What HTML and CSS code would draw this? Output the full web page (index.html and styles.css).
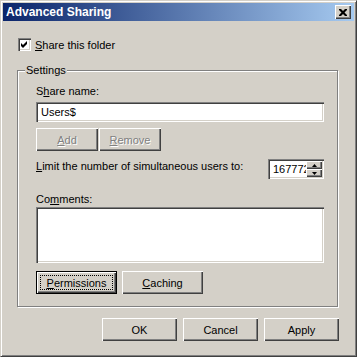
FILE: index.html
```html
<!DOCTYPE html>
<html lang="en">
<head>
  <meta charset="UTF-8" />
  <title>Advanced Sharing</title>
  <link rel="stylesheet" href="styles.css">
</head>
<body>
  <div class="window">
    <div class="titlebar">
      <span class="title">Advanced Sharing</span>
      <button class="close-btn" aria-label="Close">
        <svg width="8" height="7" viewBox="0 0 8 7">
          <path d="M0 0h2l2 2 2-2h2v1l-2.5 2.5 2.5 2.5v1h-2l-2-2-2 2h-2v-1l2.5-2.5-2.5-2.5z" fill="#000"/>
        </svg>
      </button>
    </div>

    <div class="content">
      <label class="check-row">
        <span class="checkbox">
          <svg width="9" height="9" viewBox="0 0 9 9">
            <polygon points="1,3 3,5 7,1 7,4 3,8 1,6" fill="#000"/>
          </svg>
        </span>
        <span><u>S</u>hare this folder</span>
      </label>

      <fieldset class="group">
        <legend>Settings</legend>
        <div class="group-body">
          <div class="label">S<u>h</u>are name:</div>
          <div class="field">Users$</div>

          <div class="btn-pair">
            <button class="btn small" disabled><u>A</u>dd</button>
            <button class="btn small" disabled><u>R</u>emove</button>
          </div>

          <div class="limit-row">
            <span class="limit-text"><u>L</u>imit the number of simultaneous users to:</span>
            <div class="spinner">
              <span class="spin-value">16777216</span>
              <div class="spin-btns">
                <span class="spin-btn">
                  <svg width="5" height="3" viewBox="0 0 5 3"><polygon points="2.5,0 5,3 0,3" fill="#000"/></svg>
                </span>
                <span class="spin-btn">
                  <svg width="5" height="3" viewBox="0 0 5 3"><polygon points="0,0 5,0 2.5,3" fill="#000"/></svg>
                </span>
              </div>
            </div>
          </div>

          <div class="label comments-label">Co<u>m</u>ments:</div>
          <div class="field textarea"></div>

          <div class="btn-row">
            <button class="btn wide default"><span class="focus"><u>P</u>ermissions</span></button>
            <button class="btn wide"><u>C</u>aching</button>
          </div>
        </div>
      </fieldset>

      <div class="dialog-buttons">
        <button class="btn">OK</button>
        <button class="btn">Cancel</button>
        <button class="btn">Apply</button>
      </div>
    </div>
  </div>
</body>
</html>
```

FILE: styles.css
```css
body {
  margin: 0;
  font-family: 'Liberation Sans', Arial, sans-serif;
  font-size: 11px;
  color: #000;
  background: #d4d0c8;
}

u {
  text-decoration: underline;
  text-underline-offset: 1px;
}

.window {
  width: 357px;
  height: 357px;
  box-sizing: border-box;
  border: 1px solid;
  border-color: #d4d0c8 #404040 #404040 #d4d0c8;
  box-shadow: inset 1px 1px #fff, inset -1px -1px #808080;
  padding: 2px;
  background: #d4d0c8;
}

.titlebar {
  height: 18px;
  display: flex;
  align-items: center;
  justify-content: space-between;
  padding: 0 3px 0 3px;
  background: linear-gradient(to right, #0a246a, #a6caf0);
}

.title {
  color: #fff;
  font-weight: bold;
  font-size: 12px;
}

.close-btn {
  width: 16px;
  height: 14px;
  padding: 0;
  border: none;
  background: #d4d0c8;
  box-shadow: inset 1px 1px #fff, inset -1px -1px #404040, inset -2px -2px #808080;
  display: flex;
  align-items: center;
  justify-content: center;
}

.content {
  padding: 17px 16px 0 14px;
}

.check-row {
  display: flex;
  align-items: center;
  gap: 4px;
  height: 13px;
  margin-left: 1px;
}

.checkbox {
  width: 13px;
  height: 13px;
  box-sizing: border-box;
  background: #fff;
  box-shadow: inset 1px 1px #808080, inset 2px 2px #404040, inset -1px -1px #fff, inset -2px -2px #d4d0c8;
  display: flex;
  align-items: center;
  justify-content: center;
}

.group {
  margin: 13px 0 0 0;
  padding: 0;
  border: 1px solid #808080;
  box-shadow: inset 1px 1px #fff, 1px 1px #fff;
  min-width: 0;
}

.group legend {
  margin-left: 7px;
  padding: 0 1px;
  line-height: 13px;
  background: #d4d0c8;
}

.group-body {
  padding: 8px 13px 12px 18px;
}

.label {
  line-height: 13px;
  margin-bottom: 4px;
}

.field {
  height: 20px;
  box-sizing: border-box;
  background: #fff;
  box-shadow: inset 1px 1px #808080, inset 2px 2px #404040, inset -1px -1px #fff, inset -2px -2px #d4d0c8;
  padding: 3px 5px;
  line-height: 14px;
}

.btn {
  width: 75px;
  height: 23px;
  padding: 0;
  border: none;
  background: #d4d0c8;
  box-shadow: inset 1px 1px #fff, inset -1px -1px #404040, inset -2px -2px #808080;
  font-family: inherit;
  font-size: 11px;
  color: #000;
}

.btn:disabled {
  color: #808080;
  text-shadow: 1px 1px #fff;
}

.btn-pair {
  display: flex;
  gap: 1px;
  margin-top: 6px;
}

.btn.small {
  width: 62px;
}

.limit-row {
  display: flex;
  justify-content: space-between;
  align-items: flex-start;
  margin-top: 8px;
}

.limit-text {
  padding-top: 1px;
  line-height: 13px;
}

.spinner {
  width: 56px;
  height: 20px;
  box-sizing: border-box;
  background: #fff;
  box-shadow: inset 1px 1px #808080, inset 2px 2px #404040, inset -1px -1px #fff, inset -2px -2px #d4d0c8;
  padding: 2px 2px 2px 5px;
  display: flex;
  align-items: stretch;
}

.spin-value {
  flex: 1;
  overflow: hidden;
  white-space: nowrap;
  line-height: 16px;
}

.spin-btns {
  width: 16px;
  display: flex;
  flex-direction: column;
}

.spin-btn {
  flex: 1;
  background: #d4d0c8;
  box-shadow: inset 1px 1px #fff, inset -1px -1px #404040, inset -2px -2px #808080;
  display: flex;
  align-items: center;
  justify-content: center;
}

.comments-label {
  margin-top: 14px;
  margin-bottom: 1px;
}

.textarea {
  height: 56px;
}

.btn-row {
  display: flex;
  gap: 5px;
  margin-top: 8px;
}

.btn.wide {
  width: 81px;
}

.btn.default {
  border: 1px solid #000;
  box-shadow: inset 1px 1px #fff, inset -1px -1px #404040, inset -2px -2px #808080;
  padding: 3px;
  display: flex;
}

.focus {
  flex: 1;
  border: 1px dotted #000;
  display: flex;
  align-items: center;
  justify-content: center;
}

.dialog-buttons {
  display: flex;
  justify-content: flex-end;
  gap: 6px;
  margin-top: 11px;
  margin-right: -1px;
}
```
